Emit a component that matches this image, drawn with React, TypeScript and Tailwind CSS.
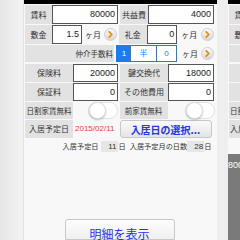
import React from "react";

const F = { fontFamily: '"Noto Sans CJK JP", "Noto Sans", sans-serif' };

function Label({ children, w, small }: { children: React.ReactNode; w: string; small?: boolean }) {
  return (
    <div className={`${w} h-full bg-[#e2e2e2] flex items-center justify-center text-[#333] whitespace-nowrap ${small ? "text-[7.5px]" : "text-[8px]"} leading-none`}>
      {children}
    </div>
  );
}

function Input({ value, w }: { value: string; w: string }) {
  return (
    <div className={`${w} h-full bg-white border border-[#555] flex items-center justify-end pr-[2px] text-[9px] text-[#222] leading-none`} style={{ fontFamily: '"Liberation Sans", sans-serif' }}>
      {value}
    </div>
  );
}

function Arrow() {
  return (
    <div className="w-[13px] h-[13px] rounded-full bg-gradient-to-b from-[#fafafa] to-[#d8d8d8] border border-[#cfcfcf] flex items-center justify-center">
      <svg width="7" height="7" viewBox="0 0 8 8">
        <path d="M2.5 1 L5.5 4 L2.5 7" stroke="#f08a00" strokeWidth="2" fill="none" strokeLinecap="round" strokeLinejoin="round" />
      </svg>
    </div>
  );
}

function Toggle() {
  return (
    <div className="w-[30px] h-[17px] rounded-full bg-white border border-[#e0e0e0] relative">
      <div className="absolute left-0 top-[-1px] w-[17px] h-[17px] rounded-full bg-white border border-[#ddd] shadow-[0_1px_2px_rgba(0,0,0,0.25)]" />
    </div>
  );
}

export default function App() {
  return (
    <div className="w-[240px] h-[240px] overflow-hidden flex bg-[#eeeeee]" style={F}>
      <div className="w-[24px] h-full bg-gradient-to-r from-[#e6e6e6] to-[#f3f3f3] border-r border-[#e2e2e2]" />
      <div className="w-[193px] h-full bg-[#f8f8f8] flex flex-col">
        <div className="h-[4px] bg-black shrink-0" />
        <div className="flex flex-col px-[1px] pr-[3px] pt-[1px] gap-[1px]">
          <div className="flex h-[19px] gap-[1px]">
            <div className="flex w-[93px] h-full">
              <Label w="w-[27px]">賃料</Label>
              <Input value="80000" w="w-[66px]" />
            </div>
            <div className="flex w-[95px] h-full ml-[1px]">
              <Label w="w-[28px]">共益費</Label>
              <Input value="4000" w="w-[66px]" />
            </div>
          </div>
          <div className="flex h-[19px] gap-[1px]">
            <div className="flex w-[93px] h-full items-center">
              <Label w="w-[27px]">敷金</Label>
              <Input value="1.5" w="w-[30px]" />
              <span className="text-[8px] text-[#333] ml-[3px] w-[19px]">ヶ月</span>
              <Arrow />
            </div>
            <div className="flex w-[95px] h-full ml-[1px] items-center">
              <Label w="w-[28px]">礼金</Label>
              <Input value="0" w="w-[31px]" />
              <span className="text-[8px] text-[#333] ml-[4px] w-[20px]">ヶ月</span>
              <Arrow />
            </div>
          </div>
          <div className="flex h-[17px] gap-[1px]">
            <div className="w-[93px] h-full bg-[#e2e2e2] flex items-center justify-end pr-[1px] text-[7.5px] text-[#333]">仲介手数料</div>
            <div className="flex w-[98px] h-full ml-[1px] items-center">
              <div className="flex h-full border border-[#1d7bf0]" style={{ fontFamily: '"Liberation Sans", "Noto Sans CJK JP", sans-serif' }}>
                <div className="w-[14px] h-full bg-[#1d7bf0] text-white text-[8px] flex items-center justify-center">1</div>
                <div className="w-[26px] h-full bg-white text-[#1d7bf0] text-[8px] flex items-center justify-center border-r border-[#1d7bf0]">半</div>
                <div className="w-[19px] h-full bg-white text-[#1d7bf0] text-[8px] flex items-center justify-center">0</div>
              </div>
              <span className="text-[8px] text-[#333] ml-[5px] w-[19px]">ヶ月</span>
              <Arrow />
            </div>
          </div>
          <div className="flex h-[18px] gap-[1px] mt-[1px]">
            <div className="flex w-[93px] h-full">
              <Label w="w-[48px]">保険料</Label>
              <Input value="20000" w="w-[45px]" />
            </div>
            <div className="flex w-[95px] h-full ml-[1px]">
              <Label w="w-[48px]">鍵交換代</Label>
              <Input value="18000" w="w-[46px]" />
            </div>
          </div>
          <div className="flex h-[18px] gap-[1px]">
            <div className="flex w-[93px] h-full">
              <Label w="w-[48px]">保証料</Label>
              <Input value="0" w="w-[45px]" />
            </div>
            <div className="flex w-[95px] h-full ml-[1px]">
              <Label w="w-[48px]">その他費用</Label>
              <Input value="0" w="w-[46px]" />
            </div>
          </div>
          <div className="flex h-[17px] gap-[1px]">
            <div className="flex w-[93px] h-full items-center">
              <Label w="w-[48px]" small>日割家賃無料</Label>
              <div className="ml-auto"><Toggle /></div>
            </div>
            <div className="flex w-[95px] h-full ml-[1px] items-center">
              <Label w="w-[48px]" small>前家賃無料</Label>
              <div className="ml-auto mr-[-1px]"><Toggle /></div>
            </div>
          </div>
          <div className="flex h-[18px] gap-[1px]">
            <div className="flex w-[93px] h-full items-center">
              <Label w="w-[48px]">入居予定日</Label>
              <span className="ml-[2px] text-[8px] text-[#f03c3c]" style={{ fontFamily: '"Liberation Sans", sans-serif' }}>2015/02/11</span>
            </div>
            <div className="flex w-[95px] h-full ml-[1px]">
              <div className="w-[92px] h-full rounded-[3px] border border-[#c8c8c8] bg-gradient-to-b from-[#fbfbfb] to-[#e4e4e4] flex items-center justify-center text-[10px] font-bold text-[#2233ee] whitespace-nowrap">入居日の選択...</div>
            </div>
          </div>
          <div className="flex h-[11px] mt-[2px] items-center text-[7.2px] text-[#333] whitespace-nowrap">
            <div className="flex w-[93px] h-full items-center justify-end">
              <span>入居予定日</span>
              <span className="ml-[2px] w-[17px] h-full bg-[#e6e6e6] flex items-center justify-end pr-[1px] text-[8px]" style={{ fontFamily: '"Liberation Sans", sans-serif' }}>11</span>
            </div>
            <div className="flex w-[96px] h-full items-center ml-[1px]">
              <span>日</span>
              <span className="ml-[4px]">入居予定月の日数</span>
              <span className="w-[17px] h-full bg-[#e6e6e6] flex items-center justify-end pr-[1px] text-[8px]" style={{ fontFamily: '"Liberation Sans", sans-serif' }}>28</span>
              <span>日</span>
            </div>
          </div>
        </div>
        <div className="flex-1" />
        <div className="flex justify-center">
          <div className="w-[110px] h-[21px] ml-[-2px] border border-[#c8c8c8] rounded-t-[3px] bg-gradient-to-b from-[#fdfdfd] to-[#f0f0f0] flex justify-center pt-[5px] text-[12px] text-[#2233ee] whitespace-nowrap">明細を表示</div>
        </div>
      </div>
      <div className="w-[11px] h-full bg-[#eeeeee]" />
      <div className="w-[12px] h-full bg-[#f8f8f8] flex flex-col overflow-hidden">
        <div className="h-[4px] bg-black shrink-0" />
        <div className="pl-[1px] pt-[1px] flex flex-col gap-[1px] text-[8px] text-[#333]">
          <div className="h-[19px] w-[27px] bg-[#e2e2e2] flex items-center justify-center whitespace-nowrap">賃料</div>
          <div className="h-[19px] w-[27px] bg-[#e2e2e2] flex items-center justify-center whitespace-nowrap">敷金</div>
          <div className="h-[17px] w-[40px] bg-[#e2e2e2]" />
          <div className="h-[18px] mt-[1px] w-[48px] bg-[#e2e2e2]" />
          <div className="h-[18px] w-[48px] bg-[#e2e2e2]" />
          <div className="h-[17px] w-[48px] bg-[#e2e2e2] flex items-center whitespace-nowrap text-[7.5px] pl-[1px]">日割家賃無料</div>
          <div className="h-[18px] w-[48px] bg-[#e2e2e2] flex items-center whitespace-nowrap pl-[1px]">入居予定日</div>
        </div>
        <div className="mt-[16px] flex-1 bg-[#7a7a7a] text-white text-[9px] pt-[5px] whitespace-nowrap" style={{ fontFamily: '"Liberation Sans", sans-serif' }}>80000</div>
      </div>
    </div>
  );
}
